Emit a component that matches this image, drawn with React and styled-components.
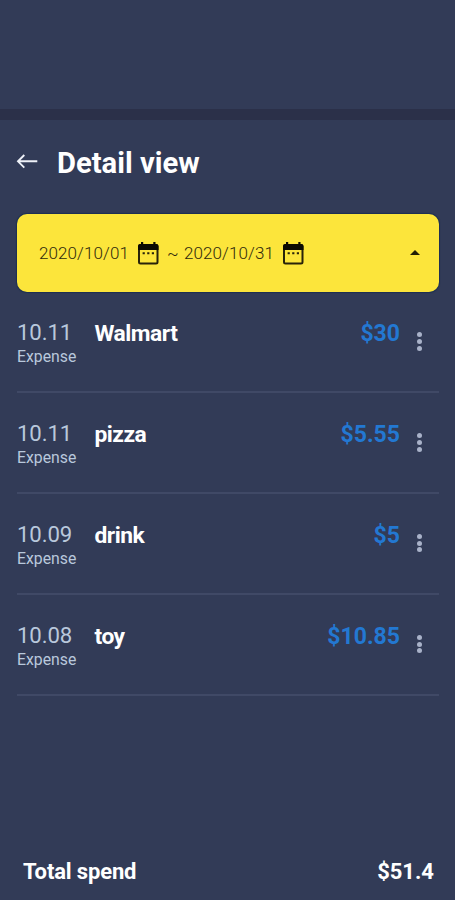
import styled, { createGlobalStyle } from 'styled-components';

const GlobalStyle = createGlobalStyle`
  * {
    box-sizing: border-box;
  }
  body {
    margin: 0;
    background: #323b57;
    font-family: Roboto, sans-serif;
  }
`;

const Screen = styled.div`
  display: flex;
  flex-direction: column;
  height: 900px;
  overflow: hidden;
  background: #323b57;
`;

const TopSpace = styled.div`
  height: 120px;
  flex-shrink: 0;
  border-bottom: 11px solid #2b3049;
`;

const Header = styled.header`
  display: flex;
  align-items: flex-start;
  height: 94px;
  flex-shrink: 0;
  padding: 25px 16px 0;
`;

const BackButton = styled.button`
  display: flex;
  width: 22px;
  margin: 8px 19px 0 0;
  padding: 0;
  border: none;
  background: none;
  cursor: pointer;
`;

const Title = styled.h1`
  margin: 0;
  color: #fff;
  font-size: 29.2px;
  font-weight: 700;
  line-height: 36px;
  white-space: nowrap;
`;

const DateRange = styled.div`
  display: flex;
  align-items: center;
  height: 78px;
  flex-shrink: 0;
  margin: 0 16px 0 17px;
  padding: 0 19px 0 22px;
  border-radius: 10px;
  background: #fce53b;
  box-shadow: 0 0 1px 1px #1d3052;
`;

const DateText = styled.span`
  width: 99px;
  color: #2f2a0c;
  font-size: 17px;
  font-weight: 300;
  letter-spacing: 0.1px;
  line-height: 20px;
`;

const Tilde = styled.span`
  width: 25px;
  padding-left: 8px;
  color: #2f2a0c;
  font-size: 17px;
  font-weight: 300;
  line-height: 20px;
`;

const Caret = styled.span`
  margin: 0 0 2px auto;
  border-right: 5px solid transparent;
  border-bottom: 5px solid #221e05;
  border-left: 5px solid transparent;
`;

const List = styled.ul`
  flex: 1;
  margin: 0 16px 0 17px;
  padding: 0;
  list-style: none;
`;

const Row = styled.li`
  display: flex;
  align-items: flex-start;
  height: 100.9px;
  padding-top: 28.3px;
  border-bottom: 2px solid #404966;
`;

const Meta = styled.div`
  display: flex;
  flex-direction: column;
  gap: 3px;
  width: 77.5px;
  color: #b9c8dc;
`;

const Day = styled.span`
  font-size: 22.2px;
  letter-spacing: -0.1px;
  line-height: 24px;
`;

const Kind = styled.span`
  font-size: 15.8px;
  line-height: 20px;
`;

const Name = styled.span`
  flex: 1;
  padding-top: 2px;
  color: #fff;
  font-size: 22.8px;
  font-weight: 700;
  letter-spacing: -0.5px;
  line-height: 24px;
`;

const Amount = styled.span`
  padding-top: 2px;
  color: #2378d2;
  font-size: 23px;
  font-weight: 700;
  line-height: 24px;
`;

const MenuButton = styled.button`
  display: flex;
  flex-direction: column;
  align-items: center;
  gap: 1.7px;
  width: 9px;
  margin: 12px 15px 0;
  padding: 0;
  border: none;
  background: none;
  cursor: pointer;
`;

const Dot = styled.span`
  width: 5px;
  height: 5px;
  border-radius: 50%;
  background: #a9b2c9;
`;

const Footer = styled.footer`
  display: flex;
  justify-content: space-between;
  height: 40px;
  padding: 0 21px 0 23px;
  color: #fff;
  font-size: 22px;
  font-weight: 700;
  line-height: 24px;
`;

const TotalLabel = styled.span`
  letter-spacing: -0.15px;
`;

const CalendarIcon = () => (
  <svg width="21" height="23" viewBox="0 0 21 23">
    <rect x="1" y="3" width="18.5" height="18.5" rx="1.5" fill="none" stroke="#28230a" strokeWidth="2" />
    <path d="M0 8V4.2Q0 2 2.2 2H3V0h2.2v2h10.1V0h2.2v2h.8q2.2 0 2.2 2.2V8z" fill="#0c0a02" />
    <path d="M4.6 10.3h2.2v2H4.6zM9.2 10.3h2.2v2H9.2zM13.8 10.3H16v2h-2.2z" fill="#28230a" />
  </svg>
);

const ArrowIcon = () => (
  <svg width="22" height="16" viewBox="0 0 22 16">
    <path d="M21.3 8.3H2.5M8.3 2L2 8.3l6.3 6.3" fill="none" stroke="#eef1f8" strokeWidth="1.9" />
  </svg>
);

const expenses = [
  { day: '10.11', name: 'Walmart', amount: '$30' },
  { day: '10.11', name: 'pizza', amount: '$5.55' },
  { day: '10.09', name: 'drink', amount: '$5' },
  { day: '10.08', name: 'toy', amount: '$10.85' },
];

const App = () => {
  return (
    <>
      <GlobalStyle />
      <Screen>
        <TopSpace />
        <Header>
          <BackButton aria-label="Back">
            <ArrowIcon />
          </BackButton>
          <Title>Detail view</Title>
        </Header>
        <DateRange>
          <DateText>2020/10/01</DateText>
          <CalendarIcon />
          <Tilde>~</Tilde>
          <DateText>2020/10/31</DateText>
          <CalendarIcon />
          <Caret />
        </DateRange>
        <List>
          {expenses.map((item) => (
            <Row key={item.day + item.name}>
              <Meta>
                <Day>{item.day}</Day>
                <Kind>Expense</Kind>
              </Meta>
              <Name>{item.name}</Name>
              <Amount>{item.amount}</Amount>
              <MenuButton aria-label="More">
                <Dot />
                <Dot />
                <Dot />
              </MenuButton>
            </Row>
          ))}
        </List>
        <Footer>
          <TotalLabel>Total spend</TotalLabel>
          <span>$51.4</span>
        </Footer>
      </Screen>
    </>
  );
};

export default App;
